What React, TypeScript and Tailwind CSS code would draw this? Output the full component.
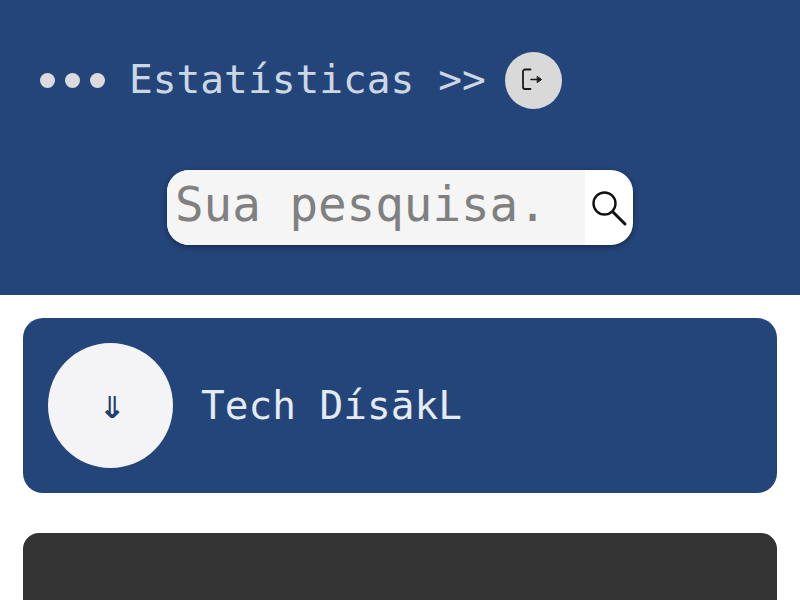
import React from 'react';

const mono = { fontFamily: '"DejaVu Sans Mono", monospace' };

function ExitIcon() {
  return (
    <svg width="24" height="24" viewBox="0 0 24 24" fill="none" stroke="#1a1a1a" strokeWidth="1.8" strokeLinecap="round" strokeLinejoin="round">
      <path d="M9.5 1.5H4a2 2 0 0 0-2 2v15.5a2 2 0 0 0 2 2h5.5" />
      <path d="M10 11.5h9.5" strokeWidth="1.5" />
      <path d="M16.5 8.5l4 3-4 3z" fill="#1a1a1a" strokeWidth="1" />
    </svg>
  );
}

function SearchIcon() {
  return (
    <svg width="38" height="38" viewBox="0 0 38 38" fill="none" stroke="#111111" strokeLinecap="round">
      <circle cx="14.5" cy="14.5" r="11" strokeWidth="2.4" />
      <path d="M23 23l12 12" strokeWidth="3" />
    </svg>
  );
}

export default function App() {
  return (
    <div className="h-[600px] w-[800px] overflow-hidden bg-white font-['DejaVu_Sans_Mono',monospace]">
      {/* Header */}
      <header className="flex h-[295px] flex-col bg-[#24457a] pt-[52px]">
        <div className="flex h-[56px] items-center pl-[40px]">
          <div className="flex gap-[10px]">
            <span className="h-[15px] w-[15px] rounded-full bg-[#dcdcdc]" />
            <span className="h-[15px] w-[15px] rounded-full bg-[#dcdcdc]" />
            <span className="h-[15px] w-[15px] rounded-full bg-[#dcdcdc]" />
          </div>
          <span className="ml-[24px] text-[39.5px] leading-none text-[#cdd7e3]">Estatísticas &gt;&gt;</span>
          <button className="ml-[19px] flex h-[57px] w-[57px] items-center justify-center rounded-full bg-[#d9d9d9]">
            <ExitIcon />
          </button>
        </div>

        {/* Search */}
        <div className="mt-[62px] flex justify-center">
          <div className="flex h-[75px] w-[466px] overflow-hidden rounded-[22px] bg-white shadow-[0_2px_6px_rgba(0,0,0,0.4)]">
            <input
              placeholder="Sua pesquisa."
              style={mono}
              className="h-full w-[418px] bg-[#f5f5f5] pb-[7px] pl-[8px] text-[47.5px] outline-none placeholder:text-[#808080]"
            />
            <div className="flex flex-1 items-center justify-center">
              <SearchIcon />
            </div>
          </div>
        </div>
      </header>

      {/* Cards */}
      <main className="flex flex-col gap-[40px] px-[23px] pt-[23px]">
        <div className="flex h-[175px] items-center rounded-[20px] bg-[#24457a] pl-[25px]">
          <div className="flex h-[125px] w-[125px] items-center justify-center rounded-full bg-[#f4f4f6] pb-[3px] pl-[3px] text-[41px] font-bold leading-none text-[#1f3d6e]">
            ⇓
          </div>
          <span className="ml-[28px] text-[39.4px] leading-none text-[#e4ebf2]">Tech DísākL</span>
        </div>
        <div className="h-[175px] rounded-[16px] bg-[#333333]" />
      </main>
    </div>
  );
}
